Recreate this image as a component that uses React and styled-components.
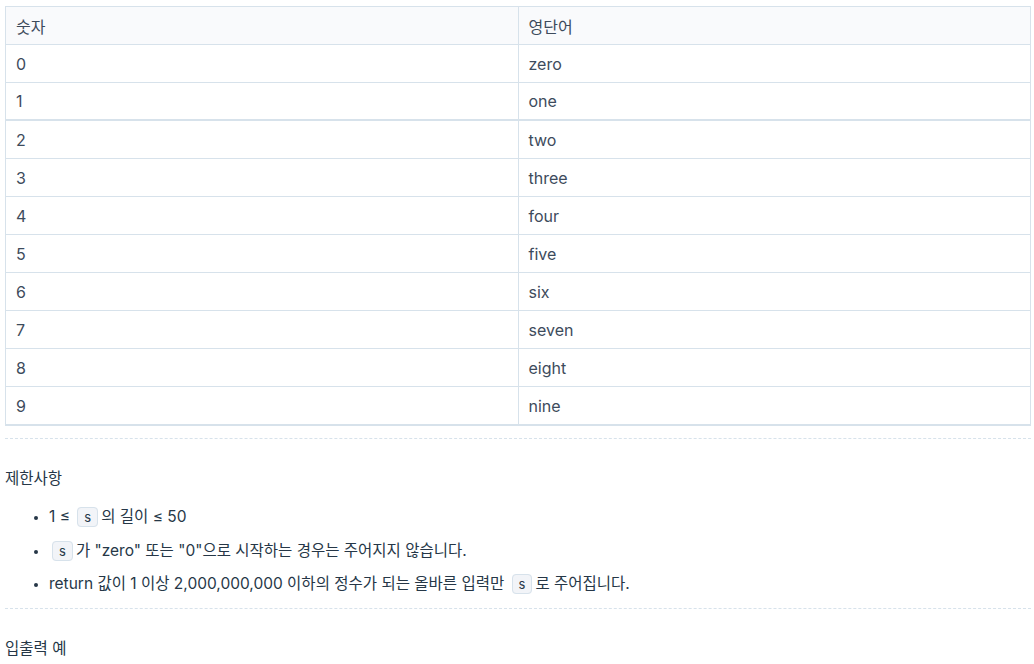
import React from "react";
import styled, { createGlobalStyle } from "styled-components";

const Global = createGlobalStyle`
  html, body { margin: 0; padding: 0; background: #fff; }
  body { font-family: Inter, "Noto Sans CJK KR", sans-serif; color: #44576c; }
`;

const Page = styled.div`
  padding: 6px 3px 0 5px;
`;

const Table = styled.table`
  width: 100%;
  border-collapse: collapse;
  border: 1px solid #d7e2eb;
  border-bottom-width: 2px;
  font-size: 16px;
  color: #3d4b5c;
`;

const Th = styled.th`
  text-align: left;
  font-weight: 400;
  background: #f9fafc;
  height: 37px;
  padding: 0 10px;
  border: 1px solid #d7e2eb;
  width: 50%;
`;

const Td = styled.td`
  height: ${(p) => (p.$thick ? "36px" : "37px")};
  padding: 0 10px;
  border: 1px solid #d7e2eb;
  border-bottom-width: ${(p) => (p.$thick ? "2px" : "1px")};
`;

const Rule = styled.hr`
  border: 0;
  border-top: 1px dashed #d7e2eb;
  margin: ${(p) => p.$top || 12}px 0 0;
`;

const Heading = styled.h5`
  margin: 0;
  padding: 29px 0 0;
  font-size: 15.5px;
  font-weight: 400;
  color: #263747;
  line-height: 22px;
`;

const List = styled.ul`
  margin: 17px 0 0;
  padding-left: 44px;
  font-size: 15.5px;
  color: #263747;
  li { line-height: 20px; margin-bottom: 13.5px; }
  li::marker { font-size: 12px; }
`;

const Code = styled.code`
  font-family: Inter, sans-serif;
  font-size: 13px;
  background: #f2f4f8;
  border: 1px solid #d7e2eb;
  border-radius: 4px;
  padding: 1px 6px;
  margin: 0 3px;
  color: #263747;
`;

const rows = [
  ["0", "zero"], ["1", "one"], ["2", "two"], ["3", "three"], ["4", "four"],
  ["5", "five"], ["6", "six"], ["7", "seven"], ["8", "eight"], ["9", "nine"],
];

export default function App() {
  return (
    <Page>
      <Global />
      <Table>
        <thead>
          <tr><Th>숫자</Th><Th>영단어</Th></tr>
        </thead>
        <tbody>
          {rows.map(([n, w]) => (
            <tr key={n}>
              <Td $thick={n === "1"}>{n}</Td>
              <Td $thick={n === "1"}>{w}</Td>
            </tr>
          ))}
        </tbody>
      </Table>
      <Rule />
      <Heading>제한사항</Heading>
      <List>
        <li>1 ≤ <Code>s</Code>의 길이 ≤ 50</li>
        <li><Code>s</Code>가 "zero" 또는 "0"으로 시작하는 경우는 주어지지 않습니다.</li>
        <li>return 값이 1 이상 2,000,000,000 이하의 정수가 되는 올바른 입력만 <Code>s</Code>로 주어집니다.</li>
      </List>
      <Rule $top={14} />
      <Heading>입출력 예</Heading>
    </Page>
  );
}
